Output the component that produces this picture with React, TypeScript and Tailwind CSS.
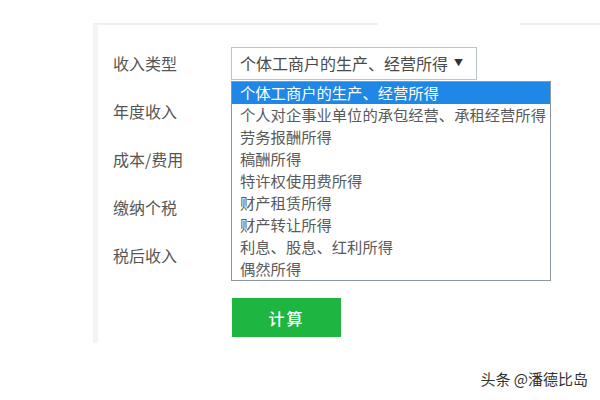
import React from 'react';

const labels = ['收入类型', '年度收入', '成本/费用', '缴纳个税', '税后收入'];

const options = [
  '个体工商户的生产、经营所得',
  '个人对企事业单位的承包经营、承租经营所得',
  '劳务报酬所得',
  '稿酬所得',
  '特许权使用费所得',
  '财产租赁所得',
  '财产转让所得',
  '利息、股息、红利所得',
  '偶然所得',
];

const SelectBox: React.FC = () => (
  <div className="relative">
    <div className="w-[246px] h-[33px] border border-[#b9c4cd] bg-white flex items-center justify-between pl-[8px] pr-[13px] text-[16px] text-[#4a4a4a]">
      <span>{options[0]}</span>
      <span className="text-[9px] text-[#333]">▼</span>
    </div>
    {/* open list */}
    <div className="absolute left-0 top-[34px] w-[320px] border border-[#8a96a3] bg-white z-10">
      {options.map((o, i) => (
        <div
          key={o}
          className={
            'h-[22px] flex items-center pl-[8px] text-[15.3px] whitespace-nowrap ' +
            (i === 0 ? 'bg-[#1f87e6] text-white' : 'text-[#5a5a5a]')
          }
        >
          {o}
        </div>
      ))}
    </div>
  </div>
);

export default function App() {
  return (
    <div
      className="relative w-[600px] h-[400px] bg-white overflow-hidden"
      style={{ fontFamily: '"Noto Sans CJK SC", "Noto Sans", sans-serif' }}
    >
      <div className="h-[23px]" />
      <div className="flex h-[2px]">
        <div className="ml-[93px] w-[285px] bg-[#efefef]" />
        <div className="ml-[142px] flex-1 bg-[#efefef]" />
      </div>
      <div className="ml-[93px] h-[318px] border-l-[5px] border-[#f4f4f4] pl-[15px] pt-[14px]">
        {labels.map((l, i) => (
          <div key={l} className="h-[48px] flex items-center">
            <div className="w-[118px] text-[16px] text-[#555]">{l}</div>
            {i === 0 && <SelectBox />}
          </div>
        ))}
        <div className="ml-[119px] mt-[19px] w-[109px] h-[39px] bg-[#1fb541] text-white text-[16px] font-medium flex items-center justify-center tracking-[2px]">
          计算
        </div>
      </div>
      <div className="absolute right-[12px] bottom-[10px] text-[15px] text-[#333]">
        头条 @潘德比岛
      </div>
    </div>
  );
}
